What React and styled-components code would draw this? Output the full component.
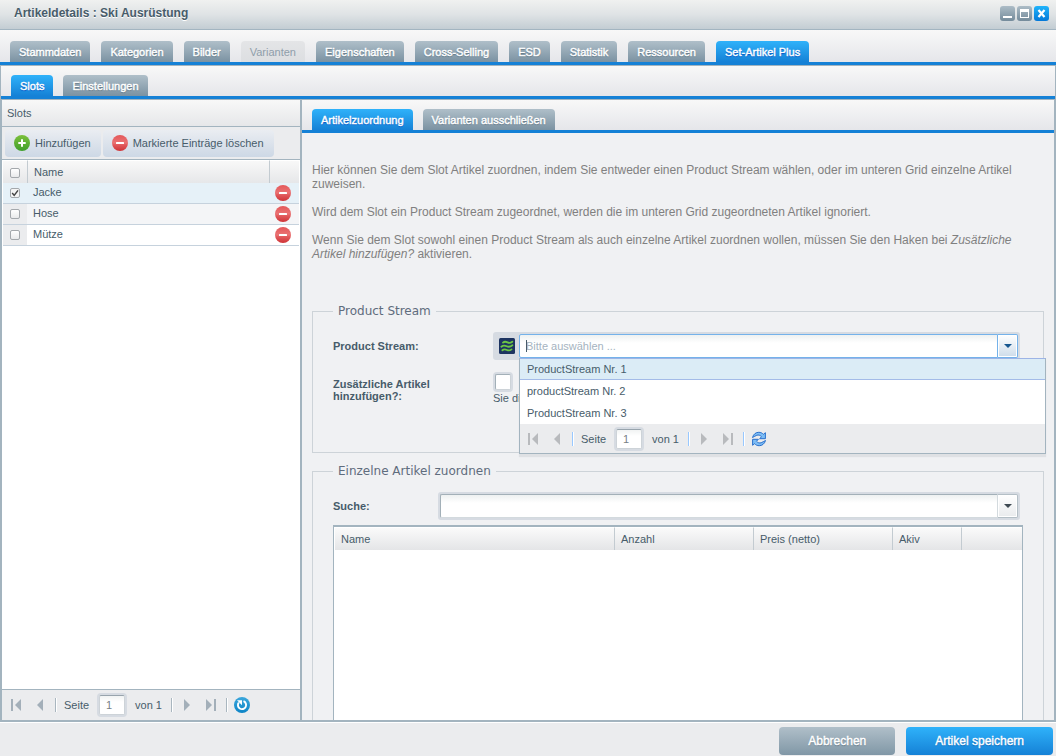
import React, { useState } from "react";
import styled, { createGlobalStyle, css } from "styled-components";

const GlobalStyle = createGlobalStyle`
  * {
    box-sizing: border-box;
  }

  body {
    margin: 0;
    font-family: "Liberation Sans", Arial, sans-serif;
    font-size: 11px;
    color: #475c6a;
    background: #ebecee;
  }

  button,
  input {
    font: inherit;
    color: inherit;
    margin: 0;
    padding: 0;
    border: 0;
    outline: none;
  }

  button {
    background: none;
    cursor: pointer;
  }
`;

// Window

const Window = styled.div`
  height: 100vh;
  display: flex;
  flex-direction: column;
  overflow: hidden;
`;

const TitleBar = styled.header`
  height: 30px;
  flex: none;
  display: flex;
  align-items: center;
  justify-content: space-between;
  padding: 0 7px 3px 14px;
  background: linear-gradient(#f0f1f0, #dfe3e5 50%, #c3cdd3);
  border-bottom: 1px solid #a3b5c1;
`;

const Title = styled.h1`
  margin: 0;
  font-size: 12px;
  font-weight: bold;
  text-shadow: 0 1px 0 #fff;
`;

const WindowTools = styled.div`
  display: flex;
  gap: 2px;
`;

const ToolButton = styled.button`
  width: 15px;
  height: 15px;
  border-radius: 3px;
  background: ${(props) =>
    props.$primary
      ? "linear-gradient(#20b4fb, #0478d8)"
      : "linear-gradient(#acbcc6, #748b9b)"};

  svg {
    display: block;
  }
`;

// Tabs

const TabBar = styled.nav`
  height: ${(props) => (props.$main ? 35 : 33)}px;
  flex: none;
  display: flex;
  align-items: flex-end;
  gap: ${(props) => (props.$main ? 11 : 10)}px;
  padding: 0 10px;
  background: linear-gradient(#f8f8f8, #e5e6ea);
  border-bottom: 3px solid #1581d6;
`;

const Tab = styled.button`
  height: 21px;
  padding: 0 9px;
  border-radius: 4px 4px 0 0;
  color: #fff;
  white-space: nowrap;
  -webkit-text-stroke: 0.4px #fff;
  text-shadow: 0 1px 1px #5f7482;
  background: linear-gradient(#afbfc9, #7b92a2);

  ${(props) =>
    props.$active &&
    css`
      text-shadow: 0 1px 1px #0a4fc0;
      background: linear-gradient(#2fb2fa, #1581d6);
    `}

  &:disabled {
    color: #8f9eaa;
    -webkit-text-stroke: 0;
    text-shadow: none;
    background: linear-gradient(#e4e5e7, #dcdee1);
    cursor: default;
  }
`;

// Panels

const Content = styled.main`
  flex: 1;
  min-height: 0;
  display: flex;
  flex-direction: column;
  border: 1px solid #a3b4bf;
`;

const Columns = styled.div`
  flex: 1;
  min-height: 0;
  display: flex;
`;

const Panel = styled.section`
  display: flex;
  flex-direction: column;
  min-width: 0;
  border: 1px solid #a3b4bf;
`;

const SlotsPanel = styled(Panel)`
  width: 300px;
  flex: none;
  background: #fff;
`;

const DetailPanel = styled(Panel)`
  flex: 1;
  background: #f0f1f3;
`;

const PanelHeader = styled.h2`
  height: 27px;
  flex: none;
  margin: 0;
  padding: 0 5px;
  font-size: 11px;
  font-weight: normal;
  line-height: 26px;
  background: linear-gradient(#f8f8f8, #e6e7e9);
  border-bottom: 1px solid #a3b4bf;
`;

const Toolbar = styled.div`
  height: 33px;
  flex: none;
  display: flex;
  align-items: center;
  gap: 2px;
  padding: 0 3px;
  background: #ebecee;
  border-bottom: 1px solid #a3b4bf;
`;

const ToolbarButton = styled.button`
  height: 27px;
  display: flex;
  align-items: center;
  gap: 5px;
  padding: 0 10px 0 9px;
  border-radius: 4px;
  white-space: nowrap;
  background: linear-gradient(#eaedf2, #cdd8e5);
`;

const SlotsGrid = styled.div`
  flex: 1;
  min-height: 0;
  border: solid #fff;
  border-width: 0 1px;
`;

const SlotTable = styled.table`
  width: 100%;
  table-layout: fixed;
  border-collapse: separate;
  border-spacing: 0;

  th,
  td {
    padding: 0;
    text-align: left;
    font-weight: normal;
  }

  th {
    height: 23px;
    background: linear-gradient(#f8f8f8, #e6e7e9);
    border-top: 1px solid #fff;
  }

  th + th {
    padding-left: 6px;
    border-left: 1px solid #c3cbd1;
  }
`;

const CheckCol = styled.col`
  width: 24px;
`;

const ActionCol = styled.col`
  width: 30px;
`;

const SlotRow = styled.tr`
  td {
    height: 21px;
    border-bottom: 1px solid #c6d2dd;
    background: ${(props) =>
      props.$selected ? "#e6f1f8" : props.$alt ? "#f4f5f7" : "#fff"};
  }

  td:first-child {
    background: ${(props) => (props.$selected ? "#e6f1f8" : "#ebecee")};
  }

  td:nth-child(2) {
    padding: 0 0 2px 6px;
  }

  td:last-child {
    padding-left: 6px;
  }
`;

const GridCheck = styled.input.attrs({ type: "checkbox" })`
  appearance: none;
  display: block;
  width: 10px;
  height: 10px;
  margin: 0 0 0 7px;
  border: 1px solid #a4a8ac;
  border-radius: 2px;
  background: linear-gradient(#fff, #e9eaeb);

  th & {
    margin-top: 2px;
  }

  &:checked {
    background: url("data:image/svg+xml,%3Csvg xmlns='http://www.w3.org/2000/svg' viewBox='0 0 8 8'%3E%3Cpath d='M1.2 4l2 2.4L7 1.4' fill='none' stroke='%23444' stroke-width='1.5'/%3E%3C/svg%3E")
      #f4f4f4;
  }
`;

const IconButton = styled.button`
  display: block;
  height: 16px;
`;

// Paging bar

const PagerBar = styled.div`
  height: ${(props) => (props.$embedded ? 29 : 31)}px;
  flex: none;
  display: flex;
  align-items: center;
  gap: 2px;
  padding: 0 ${(props) => (props.$embedded ? 2 : 3)}px;
  background: #ebecee;
  border-top: ${(props) => (props.$embedded ? "0" : "1px solid #a3b4bf")};
`;

const PagerButton = styled.button`
  width: 22px;
  height: 22px;
  display: flex;
  align-items: center;
  justify-content: center;
`;

const Separator = styled.span`
  width: 1px;
  height: 14px;
  margin: 0 2px;
  background: ${(props) => (props.$embedded ? "#98c8ff" : "#a9b6bf")};
  box-shadow: 1px 0 0 #fff;
`;

const PagerText = styled.label`
  margin-left: 4px;
`;

const PagerTotal = styled.span`
  margin-right: 5px;
`;

const PageInput = styled.input`
  width: 26px;
  height: 20px;
  margin: 0 8px;
  padding: 0 0 0 6px;
  color: #777f86;
  border: 1px solid #cdd3d8;
  border-top-color: #98a4ad;
  border-radius: 2px;
  background: linear-gradient(#f1f3f3, #fff 6px);
  box-shadow: 0 0 0 2px #d6dbe2;
`;

// Detail form

const FormBody = styled.form`
  flex: 1;
  min-height: 0;
  overflow: hidden;
  padding: 30px 10px 0;
`;

const Intro = styled.p`
  margin: 0 0 14px;
  font-size: 12px;
  line-height: 14px;
  color: #808080;
`;

const FieldSet = styled.fieldset`
  min-width: 0;
  margin: ${(props) => props.$top}px 0 0;
  padding: 13px 20px 48px;
  border: 1px solid #cdd3d8;
`;

const Legend = styled.legend`
  padding: 0 5px;
  font-family: "DejaVu Sans", Verdana, sans-serif;
  font-size: 12px;
  line-height: 16px;
  color: #5f6c7d;
`;

const Field = styled.div`
  display: flex;
  align-items: flex-start;
  margin: 0 3px ${(props) => props.$bottom || 0}px 0;
`;

const FieldLabel = styled.label`
  width: ${(props) => props.$width}px;
  flex: none;
  padding: ${(props) => props.$pad}px 40px 0 0;
  font-weight: bold;
  line-height: 12px;
`;

const Combo = styled.div`
  position: relative;
  flex: 1;
  min-width: 0;
  height: 28px;
  display: flex;
  padding: 2px;
  border-radius: 3px;
  background: #d6dbe2;
`;

const ComboIcon = styled.span`
  width: 24px;
  flex: none;
  display: flex;
  align-items: center;
  justify-content: center;
`;

const ComboInput = styled.input`
  flex: 1;
  min-width: 0;
  height: 24px;
  padding: 0 6px;
  border: 1px solid ${(props) => (props.$focused ? "#74b2ea" : "#d3dade")};
  border-top-color: ${(props) => (props.$focused ? "#74b2ea" : "#a3b0b8")};
  border-left-color: ${(props) => (props.$focused ? "#74b2ea" : "#a3b0b8")};
  border-radius: 2px 0 0 2px;
  background: linear-gradient(#eef1f1, #fff 8px);

  &::placeholder {
    color: #a5b3c0;
    opacity: 1;
  }
`;

const Caret = styled.span`
  position: absolute;
  left: 33px;
  top: 8px;
  width: 1px;
  height: 12px;
  background: #475c6a;
`;

const ComboTrigger = styled.button`
  width: 20px;
  height: 24px;
  flex: none;
  display: flex;
  align-items: center;
  justify-content: center;
  border: 1px solid ${(props) => (props.$focused ? "#74b2ea" : "#b4bfc6")};
  border-left: 0;
  border-radius: 0 2px 2px 0;
  box-shadow: inset 0 0 0 1px #fff;
  background: ${(props) =>
    props.$focused
      ? "linear-gradient(#fff, #cddcea)"
      : "linear-gradient(#fff, #e9ebed)"};
`;

const DropDown = styled.div`
  position: absolute;
  z-index: 2;
  top: 26px;
  left: 26px;
  right: -26px;
  border: 1px solid #a3b4bf;
  border-top-color: #9db4e6;
  background: #fff;
  box-shadow: 0 3px 1px #dfe1e4;
`;

const Options = styled.ul`
  margin: 0;
  padding: 0;
  list-style: none;
`;

const Option = styled.li`
  height: ${(props) => (props.$active ? 21 : 22)}px;
  padding: 0 7px;
  line-height: ${(props) => (props.$active ? 20 : 22)}px;
  background: ${(props) => (props.$active ? "#dbecf6" : "#fff")};
  border-bottom: ${(props) => (props.$active ? "1px solid #a3bbe8" : "0")};
`;

const CheckField = styled.div`
  display: flex;
  flex-direction: column;
`;

const CheckBox = styled.input.attrs({ type: "checkbox" })`
  appearance: none;
  width: 16px;
  height: 16px;
  margin: 2px;
  border: 1px solid #cdd3d8;
  border-top-color: #a3b0b8;
  border-left-color: #a3b0b8;
  border-radius: 2px;
  background: #fff;
  box-shadow: 0 0 0 2px #d6dbe2;
`;

const HelpText = styled.span`
  line-height: 12px;
`;

const ArticleGrid = styled.div`
  height: 260px;
  margin-top: 5px;
  background: #fff;
  border: 1px solid #a3b4bf;
  border-top-width: 2px;
`;

const ArticleTable = styled.table`
  width: 100%;
  table-layout: fixed;
  border-collapse: separate;
  border-spacing: 0;

  th {
    height: 23px;
    padding: 0 6px;
    text-align: left;
    font-weight: normal;
    background: linear-gradient(#fafafa, #e4e5e7);
    border-top: 1px solid #fff;
    border-left: 1px solid #c3cbd1;
  }

  th:first-child {
    border-left-color: #fff;
  }
`;

const ArticleCol = styled.col`
  width: ${(props) => props.$width}px;
`;

// Footer

const Footer = styled.footer`
  height: 34px;
  flex: none;
  display: flex;
  justify-content: flex-end;
  gap: 11px;
  padding: 4px 3px 0;
  background: #ebecee;
  border-top: 1px solid #fff;
`;

const FooterButton = styled.button`
  height: 28px;
  padding: 0 29px;
  border-radius: 4px;
  font-size: 12px;
  color: #fff;
  -webkit-text-stroke: 0.4px #fff;
  text-shadow: 0 1px 1px ${(props) => (props.$primary ? "#0c5fae" : "#5f7482")};
  background: ${(props) =>
    props.$primary
      ? "linear-gradient(#2fb2fa, #1581d6)"
      : "linear-gradient(#b0bfc9, #8097a6)"};
`;

// Icons

const AddIcon = () => (
  <svg width="16" height="16" viewBox="0 0 16 16">
    <defs>
      <linearGradient id="add" x2="0" y2="1">
        <stop offset="0" stopColor="#7cc03c" />
        <stop offset="1" stopColor="#3f9f2c" />
      </linearGradient>
    </defs>
    <circle cx="8" cy="8" r="8" fill="url(#add)" />
    <path d="M8 4.300v7.400M4.300 8h7.400" stroke="#fff" strokeWidth="2" />
  </svg>
);

const RemoveIcon = () => (
  <svg width="16" height="16" viewBox="0 0 16 16">
    <defs>
      <linearGradient id="remove" x2="0" y2="1">
        <stop offset="0" stopColor="#e4585a" />
        <stop offset="0.5" stopColor="#ea7374" />
        <stop offset="0.6" stopColor="#e25c5e" />
        <stop offset="1" stopColor="#cf3337" />
      </linearGradient>
    </defs>
    <circle cx="8" cy="8" r="8" fill="url(#remove)" />
    <rect x="4" y="7" width="8" height="2" rx="0.5" fill="#fff" />
  </svg>
);

const StreamIcon = () => (
  <svg width="16" height="16" viewBox="0 0 16 16">
    <rect width="16" height="16" rx="1.5" fill="#1d3461" />
    <g fill="none" stroke="#6cc644" strokeWidth="1.8" strokeLinecap="round">
      <path d="M4 4.6c1.600-1.400 3-1 4.500-.2s3 .8 4.800-.7" />
      <path d="M2.400 8.700c1.800-1.500 3.500-1.200 5.300-.4s3.700.6 5.700-1" />
      <path d="M3.400 12.300c1.500-1.300 3-1 4.500-.3s3 .7 4.600-.6" />
    </g>
  </svg>
);

const PageArrow = ({ back, end, embedded }) => {
  const color = embedded ? "#b8babd" : "#a3afb9";
  return (
    <svg width="12" height="12" viewBox="0 0 12 12">
      <g transform={back ? "matrix(-1 0 0 1 12 0)" : undefined} fill={color}>
        {end ? (
          <>
            <path d="M1 0l6 6-6 6z" />
            <rect x="9" width="2" height="12" />
          </>
        ) : (
          <path d="M3 0l6 6-6 6z" />
        )}
      </g>
    </svg>
  );
};

const ReloadIcon = () => (
  <svg width="16" height="16" viewBox="0 0 16 16">
    <defs>
      <linearGradient id="reload" x2="0" y2="1">
        <stop offset="0" stopColor="#3ba7dc" />
        <stop offset="1" stopColor="#0d84c6" />
      </linearGradient>
    </defs>
    <circle cx="8" cy="8" r="8" fill="url(#reload)" />
    <path
      d="M9.500 4.200A4.100 4.100 0 1 1 4.800 5.500"
      fill="none"
      stroke="#fff"
      strokeWidth="1.9"
    />
    <path d="M3 3.300h5v5z" fill="#fff" />
  </svg>
);

const RefreshIcon = () => (
  <svg width="16" height="16" viewBox="0 0 16 16">
    <g fill="#7dbdf5" stroke="#2a70cc" strokeWidth="1" strokeLinejoin="round">
      <path d="M1.500 6.500C2.500 3 5 1.300 7.800 1.300c1.900 0 3.400.7 4.600 2l2-1.600v6H8.600l1.900-1.900C9.200 4.200 7.400 3.600 5.800 4.300 4.500 4.800 3.300 5.500 1.500 6.500z" />
      <path d="M14.500 9.500c-1 3.500-3.500 5.200-6.300 5.200-1.900 0-3.400-.7-4.600-2l-2 1.600v-6h5.800l-1.900 1.900c1.300 1.600 3.100 2.200 4.700 1.500 1.300-.5 2.500-1.200 4.300-2.200z" />
    </g>
  </svg>
);

const TriggerArrow = ({ color }) => (
  <svg width="8" height="4" viewBox="0 0 8 4">
    <path d="M0 0h8L4 4z" fill={color} />
  </svg>
);

const MinimizeIcon = () => (
  <svg width="15" height="15" viewBox="0 0 15 15">
    <rect x="3" y="10" width="9" height="2" fill="#fff" />
  </svg>
);

const MaximizeIcon = () => (
  <svg width="15" height="15" viewBox="0 0 15 15">
    <path d="M3 3h9v9H3zM4 6v5h7V6z" fill="#fff" fillRule="evenodd" />
  </svg>
);

const CloseIcon = () => (
  <svg width="15" height="15" viewBox="0 0 15 15">
    <path d="M4.500 4l6 7M10.500 4l-6 7" stroke="#fff" strokeWidth="2.200" />
  </svg>
);

const Pager = ({ id, embedded }) => (
  <PagerBar $embedded={embedded}>
    <PagerButton type="button" aria-label="Erste Seite">
      <PageArrow back end embedded={embedded} />
    </PagerButton>
    <PagerButton type="button" aria-label="Vorherige Seite">
      <PageArrow back embedded={embedded} />
    </PagerButton>
    <Separator $embedded={embedded} />
    <PagerText htmlFor={id}>Seite</PagerText>
    <PageInput id={id} defaultValue="1" />
    <PagerTotal>von 1</PagerTotal>
    <Separator $embedded={embedded} />
    <PagerButton type="button" aria-label="Nächste Seite">
      <PageArrow embedded={embedded} />
    </PagerButton>
    <PagerButton type="button" aria-label="Letzte Seite">
      <PageArrow end embedded={embedded} />
    </PagerButton>
    <Separator $embedded={embedded} />
    <PagerButton type="button" aria-label="Aktualisieren">
      {embedded ? <RefreshIcon /> : <ReloadIcon />}
    </PagerButton>
  </PagerBar>
);

const mainTabs = [
  "Stammdaten",
  "Kategorien",
  "Bilder",
  "Varianten",
  "Eigenschaften",
  "Cross-Selling",
  "ESD",
  "Statistik",
  "Ressourcen",
  "Set-Artikel Plus",
];

const Tabs = ({ items, initial, main, disabled }) => {
  const [active, setActive] = useState(initial);

  return (
    <TabBar $main={main}>
      {items.map((item) => (
        <Tab
          key={item}
          type="button"
          disabled={item === disabled}
          $active={item === active}
          onClick={() => setActive(item)}
        >
          {item}
        </Tab>
      ))}
    </TabBar>
  );
};

const Slots = () => {
  const [slots, setSlots] = useState([
    { name: "Jacke", selected: true },
    { name: "Hose", selected: false },
    { name: "Mütze", selected: false },
  ]);

  const toggle = (name) => {
    setSlots(
      slots.map((slot) =>
        slot.name === name ? { ...slot, selected: !slot.selected } : slot
      )
    );
  };

  return (
    <SlotsPanel>
      <PanelHeader>Slots</PanelHeader>
      <Toolbar>
        <ToolbarButton type="button">
          <AddIcon />
          Hinzufügen
        </ToolbarButton>
        <ToolbarButton type="button">
          <RemoveIcon />
          Markierte Einträge löschen
        </ToolbarButton>
      </Toolbar>
      <SlotsGrid>
        <SlotTable>
          <colgroup>
            <CheckCol />
            <col />
            <ActionCol />
          </colgroup>
          <thead>
            <tr>
              <th>
                <GridCheck aria-label="Alle auswählen" />
              </th>
              <th>Name</th>
              <th />
            </tr>
          </thead>
          <tbody>
            {slots.map((slot, index) => (
              <SlotRow
                key={slot.name}
                $selected={slot.selected}
                $alt={index % 2 === 1}
              >
                <td>
                  <GridCheck
                    aria-label={slot.name}
                    checked={slot.selected}
                    onChange={() => toggle(slot.name)}
                  />
                </td>
                <td>{slot.name}</td>
                <td>
                  <IconButton type="button" aria-label="Löschen">
                    <RemoveIcon />
                  </IconButton>
                </td>
              </SlotRow>
            ))}
          </tbody>
        </SlotTable>
      </SlotsGrid>
      <Pager id="slots-page" />
    </SlotsPanel>
  );
};

const streams = [
  "ProductStream Nr. 1",
  "productStream Nr. 2",
  "ProductStream Nr. 3",
];

const StreamCombo = () => {
  const [open, setOpen] = useState(true);
  const [value, setValue] = useState("");

  const select = (stream) => {
    setValue(stream);
    setOpen(false);
  };

  return (
    <Combo>
      <ComboIcon>
        <StreamIcon />
      </ComboIcon>
      <ComboInput
        id="stream"
        role="combobox"
        aria-expanded={open}
        aria-controls="stream-options"
        placeholder="Bitte auswählen ..."
        value={value}
        onChange={(e) => setValue(e.target.value)}
        $focused={open}
      />
      {open && !value && <Caret />}
      <ComboTrigger
        type="button"
        aria-label="Auswahl öffnen"
        onClick={() => setOpen(!open)}
        $focused={open}
      >
        <TriggerArrow color="#16578f" />
      </ComboTrigger>
      {open && (
        <DropDown>
          <Options id="stream-options" role="listbox">
            {streams.map((stream, index) => (
              <Option
                key={stream}
                role="option"
                aria-selected={index === 0}
                $active={index === 0}
                onClick={() => select(stream)}
              >
                {stream}
              </Option>
            ))}
          </Options>
          <Pager id="stream-page" embedded />
        </DropDown>
      )}
    </Combo>
  );
};

const Details = () => (
  <DetailPanel>
    <Tabs
      items={["Artikelzuordnung", "Varianten ausschließen"]}
      initial="Artikelzuordnung"
    />
    <FormBody onSubmit={(e) => e.preventDefault()}>
      <Intro>
        Hier können Sie dem Slot Artikel zuordnen, indem Sie entweder einen
        Product Stream wählen, oder im unteren Grid einzelne Artikel zuweisen.
      </Intro>
      <Intro>
        Wird dem Slot ein Product Stream zugeordnet, werden die im unteren Grid
        zugeordneten Artikel ignoriert.
      </Intro>
      <Intro>
        Wenn Sie dem Slot sowohl einen Product Stream als auch einzelne Artikel
        zuordnen wollen, müssen Sie den Haken bei{" "}
        <em>Zusätzliche Artikel hinzufügen?</em> aktivieren.
      </Intro>

      <FieldSet $top={42}>
        <Legend>Product Stream</Legend>
        <Field $bottom={12}>
          <FieldLabel htmlFor="stream" $width={160} $pad={8}>
            Product Stream:
          </FieldLabel>
          <StreamCombo />
        </Field>
        <Field>
          <FieldLabel htmlFor="additional" $width={160} $pad={6}>
            Zusätzliche Artikel hinzufügen?:
          </FieldLabel>
          <CheckField>
            <CheckBox id="additional" />
            <HelpText>Sie di</HelpText>
          </CheckField>
        </Field>
      </FieldSet>

      <FieldSet $top={10}>
        <Legend>Einzelne Artikel zuordnen</Legend>
        <Field>
          <FieldLabel htmlFor="search" $width={105} $pad={8}>
            Suche:
          </FieldLabel>
          <Combo>
            <ComboInput id="search" />
            <ComboTrigger type="button" aria-label="Suche öffnen">
              <TriggerArrow color="#3f4a52" />
            </ComboTrigger>
          </Combo>
        </Field>
        <ArticleGrid>
          <ArticleTable>
            <colgroup>
              <col />
              <ArticleCol $width={139} />
              <ArticleCol $width={139} />
              <ArticleCol $width={69} />
              <ArticleCol $width={61} />
            </colgroup>
            <thead>
              <tr>
                <th>Name</th>
                <th>Anzahl</th>
                <th>Preis (netto)</th>
                <th>Akiv</th>
                <th />
              </tr>
            </thead>
          </ArticleTable>
        </ArticleGrid>
      </FieldSet>
    </FormBody>
  </DetailPanel>
);

const App = () => (
  <>
    <GlobalStyle />
    <Window>
      <TitleBar>
        <Title>Artikeldetails : Ski Ausrüstung</Title>
        <WindowTools>
          <ToolButton type="button" aria-label="Minimieren">
            <MinimizeIcon />
          </ToolButton>
          <ToolButton type="button" aria-label="Maximieren">
            <MaximizeIcon />
          </ToolButton>
          <ToolButton type="button" aria-label="Schließen" $primary>
            <CloseIcon />
          </ToolButton>
        </WindowTools>
      </TitleBar>
      <Tabs
        main
        items={mainTabs}
        initial="Set-Artikel Plus"
        disabled="Varianten"
      />
      <Content>
        <Tabs items={["Slots", "Einstellungen"]} initial="Slots" />
        <Columns>
          <Slots />
          <Details />
        </Columns>
      </Content>
      <Footer>
        <FooterButton type="button">Abbrechen</FooterButton>
        <FooterButton type="button" $primary>
          Artikel speichern
        </FooterButton>
      </Footer>
    </Window>
  </>
);

export default App;
